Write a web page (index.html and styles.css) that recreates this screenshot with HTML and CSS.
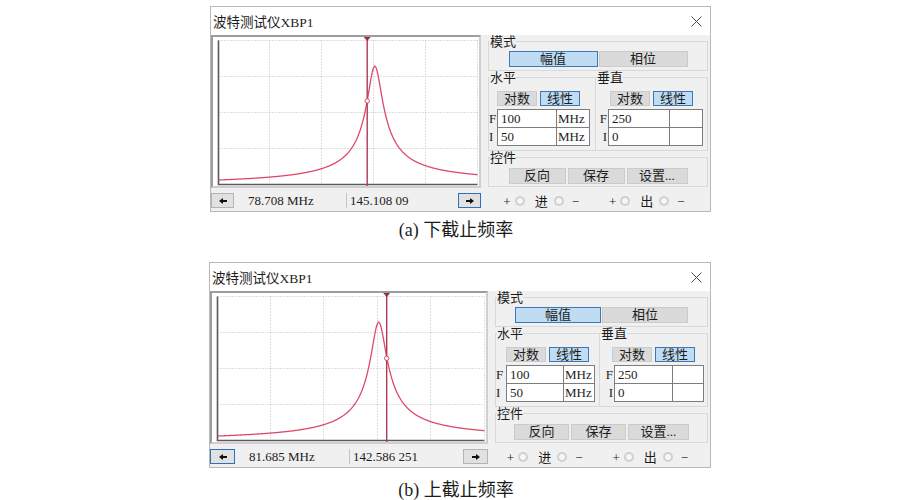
FILE: index.html
```html
<!DOCTYPE html>
<html lang="zh-CN">
<head>
    <meta charset="UTF-8">
    <meta name="viewport" content="width=device-width, initial-scale=1.0">
    <title>波特测试仪XBP1</title>
    <link rel="stylesheet" href="styles.css">
</head>
<body>

<div class="page">

    <div class="window">
        <div class="titlebar">
            <span class="title">波特测试仪XBP1</span>
            <svg class="close" viewBox="0 0 11 11"><path d="M0.5 0.5L10.5 10.5M10.5 0.5L0.5 10.5"/></svg>
        </div>
        <div class="body">
            <div class="left">
                <div class="plot" data-cursor="78.708" data-value="145.108"><svg></svg></div>
                <div class="status">
                    <button class="arrow"><svg viewBox="0 0 8 6"><path d="M0 3L4 0V2H8V4H4V6Z"/></svg></button>
                    <span class="field">78.708 MHz</span>
                    <span class="field">145.108 09</span>
                    <button class="arrow focus"><svg viewBox="0 0 8 6"><path d="M8 3L4 0V2H0V4H4V6Z"/></svg></button>
                </div>
            </div>
            <div class="panel">
                <fieldset class="group mode">
                    <legend>模式</legend>
                    <div class="btn-row">
                        <button class="btn on">幅值</button>
                        <button class="btn">相位</button>
                    </div>
                </fieldset>
                <div class="axes">
                    <fieldset class="group axis h">
                        <legend>水平</legend>
                        <div class="btn-row">
                            <button class="btn">对数</button>
                            <button class="btn on">线性</button>
                        </div>
                        <table class="entries">
                            <tr><th>F</th><td class="val">100</td><td class="unit">MHz</td></tr>
                            <tr><th>I</th><td class="val">50</td><td class="unit">MHz</td></tr>
                        </table>
                    </fieldset>
                    <fieldset class="group axis v">
                        <legend>垂直</legend>
                        <div class="btn-row">
                            <button class="btn">对数</button>
                            <button class="btn on">线性</button>
                        </div>
                        <table class="entries">
                            <tr><th>F</th><td class="val">250</td><td class="unit"></td></tr>
                            <tr><th>I</th><td class="val">0</td><td class="unit"></td></tr>
                        </table>
                    </fieldset>
                </div>
                <fieldset class="group ctrl">
                    <legend>控件</legend>
                    <div class="btn-row">
                        <button class="btn">反向</button>
                        <button class="btn">保存</button>
                        <button class="btn wide">设置...</button>
                    </div>
                </fieldset>
                <div class="terminals">
                    <span class="term"><span class="sign">+</span><i class="pin"></i><span class="lbl">进</span><i class="pin"></i><span class="sign">−</span></span>
                    <span class="term"><span class="sign">+</span><i class="pin"></i><span class="lbl">出</span><i class="pin"></i><span class="sign">−</span></span>
                </div>
            </div>
        </div>
    </div>
    <p class="caption">(a) 下截止频率</p>

    <div class="window wide">
        <div class="titlebar">
            <span class="title">波特测试仪XBP1</span>
            <svg class="close" viewBox="0 0 11 11"><path d="M0.5 0.5L10.5 10.5M10.5 0.5L0.5 10.5"/></svg>
        </div>
        <div class="body">
            <div class="left">
                <div class="plot" data-cursor="81.685" data-value="142.586"><svg></svg></div>
                <div class="status">
                    <button class="arrow focus"><svg viewBox="0 0 8 6"><path d="M0 3L4 0V2H8V4H4V6Z"/></svg></button>
                    <span class="field">81.685 MHz</span>
                    <span class="field">142.586 251</span>
                    <button class="arrow"><svg viewBox="0 0 8 6"><path d="M8 3L4 0V2H0V4H4V6Z"/></svg></button>
                </div>
            </div>
            <div class="panel">
                <fieldset class="group mode">
                    <legend>模式</legend>
                    <div class="btn-row">
                        <button class="btn on">幅值</button>
                        <button class="btn">相位</button>
                    </div>
                </fieldset>
                <div class="axes">
                    <fieldset class="group axis h">
                        <legend>水平</legend>
                        <div class="btn-row">
                            <button class="btn">对数</button>
                            <button class="btn on">线性</button>
                        </div>
                        <table class="entries">
                            <tr><th>F</th><td class="val">100</td><td class="unit">MHz</td></tr>
                            <tr><th>I</th><td class="val">50</td><td class="unit">MHz</td></tr>
                        </table>
                    </fieldset>
                    <fieldset class="group axis v">
                        <legend>垂直</legend>
                        <div class="btn-row">
                            <button class="btn">对数</button>
                            <button class="btn on">线性</button>
                        </div>
                        <table class="entries">
                            <tr><th>F</th><td class="val">250</td><td class="unit"></td></tr>
                            <tr><th>I</th><td class="val">0</td><td class="unit"></td></tr>
                        </table>
                    </fieldset>
                </div>
                <fieldset class="group ctrl">
                    <legend>控件</legend>
                    <div class="btn-row">
                        <button class="btn">反向</button>
                        <button class="btn">保存</button>
                        <button class="btn wide">设置...</button>
                    </div>
                </fieldset>
                <div class="terminals">
                    <span class="term"><span class="sign">+</span><i class="pin"></i><span class="lbl">进</span><i class="pin"></i><span class="sign">−</span></span>
                    <span class="term"><span class="sign">+</span><i class="pin"></i><span class="lbl">出</span><i class="pin"></i><span class="sign">−</span></span>
                </div>
            </div>
        </div>
    </div>
    <p class="caption last">(b) 上截止频率</p>

</div>

<script>
    // resonance curve of the circuit under test (linear scales: 50-100 MHz, 0-250)
    var NS = 'http://www.w3.org/2000/svg';
    var F0 = 80.18, Q = 26.9, PEAK = 205.3;

    function gain(f) {
        var d = f / F0 - F0 / f;
        return PEAK / Math.sqrt(1 + Q * Q * d * d);
    }

    function add(svg, tag, attrs) {
        var el = document.createElementNS(NS, tag);
        for (var k in attrs) el.setAttribute(k, attrs[k]);
        svg.appendChild(el);
        return el;
    }

    document.querySelectorAll('.plot').forEach(function (plot) {
        var svg = plot.querySelector('svg');
        var w = plot.clientWidth, h = plot.clientHeight;
        svg.setAttribute('viewBox', '0 0 ' + w + ' ' + h);

        var x0 = 5.5, x1 = w - 1.5, y0 = 3.5, y1 = h - 1.5;
        var px = function (f) { return x0 + (f - 50) / 50 * (x1 - x0); };
        var py = function (a) { return y1 - a / 250 * (y1 - y0); };

        for (var i = 1; i <= 5; i++) {
            var x = Math.round(x0 + i * (x1 - x0) / 5) - 0.5;
            add(svg, 'line', {x1: x, y1: y0, x2: x, y2: y1, 'class': 'grid'});
        }
        for (var j = 0; j < 4; j++) {
            var y = Math.round(y0 + j * (y1 - y0) / 4) - 0.5;
            add(svg, 'line', {x1: x0, y1: y, x2: x1, y2: y, 'class': 'grid'});
        }
        add(svg, 'path', {d: 'M' + x0 + ' ' + y0 + 'V' + y1 + 'H' + x1, 'class': 'axis-line'});

        var d = '';
        for (var f = 50; f <= 100.001; f += 0.1) {
            d += (d ? 'L' : 'M') + px(f).toFixed(2) + ' ' + py(gain(f)).toFixed(2);
        }
        add(svg, 'path', {d: d, 'class': 'curve'});

        var xc = px(parseFloat(plot.dataset.cursor));
        var yc = py(parseFloat(plot.dataset.value));
        add(svg, 'line', {x1: xc, y1: 0, x2: xc, y2: h, 'class': 'cursor'});
        add(svg, 'path', {d: 'M' + (xc - 3.5) + ' 0H' + (xc + 3.5) + 'L' + xc + ' 4Z', 'class': 'marker'});
        add(svg, 'circle', {cx: xc, cy: yc, r: 2.2, 'class': 'dot'});
    });
</script>

</body>
</html>
```

FILE: styles.css
```css
body {
    margin: 0;
    background-color: #fff;
    font-family: "Liberation Serif", "Noto Sans CJK SC", serif;
    color: #1c1c1c;
}
.page {
    width: 503px;
    margin-left: 209px;
    padding-top: 6px;
}
.window {
    --plot-w: 270px;
    --mode-w: 89px;
    --h-w: 107px;
    --h-pad: 8px;
    --key-h: 8px;
    --key-v: 11px;
    --val-h: 59px;
    --val-v: 61px;
    --unit-w: 33px;
    --ctrl-w: 57px;
    --arrow-w: 23px;
    width: 499px;
    margin-left: 1px;
    border: 1px solid #b8b8b8;
    background-color: #f0f0f0;
    font-size: 13px;
}
.window.wide {
    --plot-w: 278px;
    --mode-w: 86px;
    --h-w: 104px;
    --h-pad: 10px;
    --key-h: 10px;
    --key-v: 13px;
    --val-h: 57px;
    --val-v: 58px;
    --unit-w: 31px;
    --ctrl-w: 55px;
    --arrow-w: 25px;
    width: 500px;
    margin-left: 0;
}
.titlebar {
    display: flex;
    align-items: center;
    justify-content: space-between;
    height: 28px;
    padding: 0 8px 0 2px;
    background-color: #fff;
}
.title {
    font-size: 13.5px;
}
.close {
    width: 11px;
    height: 11px;
    fill: none;
    stroke: #4a4a4a;
    stroke-width: 1;
}
.body {
    display: flex;
    gap: 7px;
    height: 176px;
    padding-right: 2px;
}
.left {
    flex: none;
    width: var(--plot-w);
}
.plot {
    height: 153px;
    box-sizing: border-box;
    border: 2px solid;
    border-color: #9d9d9d #cfcfcf #cfcfcf #9d9d9d;
    background-color: #fff;
}
.plot svg {
    display: block;
    width: 100%;
    height: 100%;
}
.plot .grid {
    stroke: #bdbdbd;
    stroke-width: 1;
    stroke-dasharray: 1 2;
}
.plot .axis-line {
    fill: none;
    stroke: #5a5a5a;
    stroke-width: 1.6;
}
.plot .curve {
    fill: none;
    stroke: #dc4a6a;
    stroke-width: 1.3;
}
.plot .cursor {
    stroke: #b03a52;
    stroke-width: 1.4;
}
.plot .marker {
    fill: #9c2e44;
}
.plot .dot {
    fill: #fff;
    stroke: #dc4a6a;
    stroke-width: 1;
}
.status {
    display: grid;
    grid-template-columns: var(--arrow-w) 1fr 1fr var(--arrow-w);
    height: 15px;
    margin-top: 5px;
}
.arrow {
    display: flex;
    align-items: center;
    justify-content: center;
    padding: 0;
    border: 1px solid #b4b4b4;
    background-color: #e1e1e1;
}
.arrow.focus {
    border-color: #2f6fc0;
}
.arrow svg {
    width: 8px;
    height: 6px;
    fill: #111;
}
.field {
    padding-left: 14px;
    line-height: 15px;
    white-space: nowrap;
}
.field + .field {
    padding-left: 3px;
    border-left: 1px solid #c4c4c4;
}
.panel {
    flex: 1;
    display: flex;
    flex-direction: column;
    min-width: 0;
}
.group {
    min-width: 0;
    margin: 0;
    padding: 0;
    border: 1px solid #d8d8d8;
}
.group legend {
    margin-left: 1px;
    padding: 0;
    line-height: 13px;
}
.btn-row {
    display: flex;
    justify-content: center;
    gap: 1px;
}
.btn {
    height: 16px;
    padding: 0;
    border: 1px solid #cbcbcb;
    background-color: #dadada;
    font: inherit;
    line-height: 14px;
    color: inherit;
}
.btn.on {
    background-color: #bfdcf3;
    border-color: #3c79b4;
}
.mode {
    padding: 3px 0;
}
.mode .btn {
    width: var(--mode-w);
}
.axes {
    display: flex;
}
.axis {
    padding: 7px 0 4px;
}
.axis.h {
    flex: none;
    width: var(--h-w);
    box-sizing: border-box;
    border-right: none;
}
.axis.v {
    flex: 1;
}
.axis .btn-row {
    gap: 3px;
    margin-bottom: 3px;
}
.axis.h .btn-row {
    justify-content: flex-start;
    padding-left: var(--h-pad);
}
.axis .btn {
    width: 40px;
    height: 15px;
    line-height: 13px;
}
.entries {
    border-collapse: collapse;
}
.entries th {
    width: var(--key-h);
    padding: 0;
    font-weight: normal;
    text-align: left;
}
.axis.v .entries th {
    width: var(--key-v);
    padding-right: 1px;
    text-align: right;
}
.entries td {
    height: 18px;
    box-sizing: border-box;
    padding: 0 0 0 3px;
    border: 1px solid #7d7d7d;
    background-color: #fff;
    line-height: 16px;
}
.entries .val {
    width: var(--val-h);
}
.axis.v .entries .val {
    width: var(--val-v);
}
.entries .unit {
    width: var(--unit-w);
    padding-left: 1px;
}
.ctrl {
    padding: 4px 0 2px;
}
.ctrl .btn-row {
    gap: 2px;
}
.ctrl .btn {
    width: var(--ctrl-w);
}
.ctrl .btn.wide {
    width: 61px;
}
.terminals {
    display: flex;
    align-items: center;
    justify-content: center;
    gap: 30px;
    height: 24px;
    box-sizing: border-box;
    padding: 4px 8px 0 0;
}
.term {
    display: flex;
    align-items: center;
    line-height: 13px;
}
.sign {
    font-size: 13px;
}
.pin {
    width: 10px;
    height: 10px;
    border-radius: 50%;
    background: radial-gradient(circle, #f6f6f6 0 2.5px, #d0d0d0 3.5px);
}
.sign + .pin {
    margin: 0 10px 0 4px;
}
.lbl + .pin {
    margin: 0 8px 0 6px;
}
.caption {
    margin: 8px 0 22px;
    padding-right: 9px;
    text-align: center;
    font-size: 18px;
    line-height: 20px;
}
.caption.last {
    margin-top: 12px;
}
```
